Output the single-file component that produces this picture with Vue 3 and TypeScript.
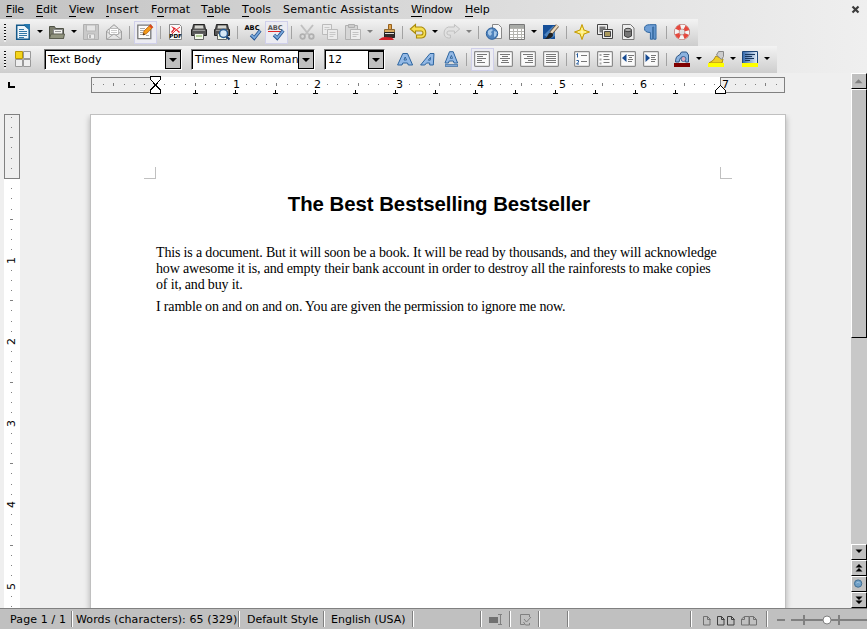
<script setup lang="ts">
interface Tool {
  icon: string
  menu?: boolean
  active?: boolean
  muted?: boolean
  sep?: boolean
}

const sep: Tool = { icon: '', sep: true }

const menus = ['File', 'Edit', 'View', 'Insert', 'Format', 'Table', 'Tools', 'Semantic Assistants', 'Window', 'Help']
// index of the underlined access key in each menu label
const keys = [0, 0, 0, 0, 1, 1, 0, -1, 0, 0]

const standard: Tool[] = [
  { icon: 'newDoc', menu: true }, { icon: 'open', menu: true }, { icon: 'save' }, { icon: 'mail' }, sep,
  { icon: 'edit', active: true }, sep,
  { icon: 'pdf' }, { icon: 'print' }, { icon: 'preview' }, sep,
  { icon: 'spell' }, { icon: 'autospell', active: true }, sep,
  { icon: 'cut' }, { icon: 'copy' }, { icon: 'paste', menu: true, muted: true }, { icon: 'brush' }, sep,
  { icon: 'undo', menu: true }, { icon: 'redo', menu: true, muted: true }, sep,
  { icon: 'link' }, { icon: 'table', menu: true }, { icon: 'draw' }, sep,
  { icon: 'navigator' }, { icon: 'gallery' }, { icon: 'sources' }, { icon: 'pilcrow' }, sep,
  { icon: 'help' },
]

const formatting: Tool[] = [
  { icon: 'bold' }, { icon: 'italic' }, { icon: 'underline' }, sep,
  { icon: 'left', active: true }, { icon: 'center' }, { icon: 'right' }, { icon: 'justify' }, sep,
  { icon: 'numbers' }, { icon: 'bullets' }, { icon: 'outdent' }, { icon: 'indent' }, sep,
  { icon: 'fontColor', menu: true }, { icon: 'highlight', menu: true }, { icon: 'background', menu: true },
]

const frame = '<rect x=".6" y=".6" width="14.8" height="14.8" rx=".8" fill="#fafafa" stroke="#8a8a8a" stroke-width="1.2"/>'
const lines = (d: string) => frame + `<path d="${d}" stroke="#777" fill="none"/>`
const check = '<path d="M6 11l3.2 3.2L15.2 6.5" fill="none" stroke="#24538f" stroke-width="3.4"/><path d="M6.3 11l3 3L15 6.9" fill="none" stroke="#79a8dc" stroke-width="1.8"/>'
const printer = '<path d="M2.5.5h11l1 5h1v6h-3v-2h-9v2h-3v-6h1z" fill="#555" stroke="#222"/><path d="M4 1.500h8l.5 3h-9z" fill="#d5d5d0"/><path d="M2 6.500h12" stroke="#999"/><path d="M3.500 9.500h9v6h-9z" fill="#f2f8ea" stroke="#666"/><path d="M5 12h6" stroke="#b4cf9a" stroke-width="2"/>'

const icons: Record<string, string> = {
  newDoc: '<path d="M1.700 1.200h8l4.500 4v10.100h-12.500z" fill="#eef6fb" stroke="#14598a" stroke-width="1.500"/><path d="M8.500 0h6.500v6.500z" fill="#2577ad"/><path d="M4 5.500h5M4 7.500h8M4 9.500h8M4 11.500h8M4 13.500h5" stroke="#3278a6"/>',
  open: '<path d="M.500 14.500v-12h5l1 2h8v10z" fill="#7b7d6c" stroke="#4e5145"/><path d="M4.500 5.500h9v5h-9z" fill="#f4f4f0" stroke="#888"/><path d="M6 7.500h6" stroke="#999"/><path d="M.500 14.500l1.500-4.500h13.500l-1 4.500z" fill="#92957f" stroke="#5c5f50"/>',
  save: '<path d="M.500.500h15v15h-15z" fill="#c9c9c9" stroke="#b0b0b0"/><path d="M3.500 1h9v6h-9z" fill="#e6e6e6" stroke="#b9b9b9"/><path d="M4.500 10h7v5h-7z" fill="#ededed" stroke="#b5b5b5"/><path d="M6 11h2v3h-2z" fill="#b5b5b5"/>',
  mail: '<path d="M.600 7l7.400-6.300L15.400 7v8.400h-14.800z" fill="#e6e6e6" stroke="#999"/><path d="M3.500 4.500h9v6h-9z" fill="#fff" stroke="#bbb"/><path d="M5 6.500h6M5 8.500h6" stroke="#ccc"/><path d="M.800 7.500l5 4-5 3.800M15.200 7.500l-5 4 5 3.800M5.800 11.500l2.200-1.500 2.200 1.500" fill="none" stroke="#aaa"/>',
  edit: '<path d="M.800 1.200h13v13.500h-13z" fill="#fbfbfb" stroke="#777" stroke-width="1.300"/><path d="M3 4.500h5M3 6.500h4M3 8.500h3M3 10.500h3M9 11.500h3" stroke="#aaa"/><path d="M6 11l1-4 6.500-6.300 2.400 2.600-6.600 6.500z" fill="#f49a18" stroke="#b65c0b" stroke-width=".8"/><path d="M12.700 1.300l2.500 2.500" stroke="#d42" stroke-width="2"/><path d="M6 11l.700-2 1.300 1.400z" fill="#222"/>',
  pdf: '<path d="M1.500.500h10l2 2v13h-12z" fill="#fafafa" stroke="#888"/><path d="M3 2l4 2 5 4-1 1-4-4-3 4-1-1 2.500-3z" fill="#e01b24"/><path d="M12 3l-4 3-4 4" stroke="#e33" fill="none"/><text x="7.600" y="14" font-size="5.600" font-weight="bold" text-anchor="middle" font-family="DejaVu Sans">PDF</text>',
  print: printer,
  preview: printer + '<path d="M12 12l3.500 3.500" stroke="#173e6e" stroke-width="2.200"/><circle cx="9.500" cy="9.500" r="4" fill="#d6e7f5" stroke="#285a91" stroke-width="1.500"/>',
  spell: '<text x="7" y="5.600" font-size="6.600" font-weight="bold" text-anchor="middle" font-family="DejaVu Sans">ABC</text>' + check,
  autospell: '<text x="7.200" y="5.600" font-size="6.600" font-weight="bold" fill="#555" text-anchor="middle" font-family="DejaVu Sans">ABC</text><path d="M0 8l1-1 1 1 1-1 1 1 1-1 1 1 1-1 1 1 1-1 1 1 1-1 1 1 1-1 1 1" stroke="#e12525" fill="none"/>' + check,
  cut: '<path d="M2 1l8 10M14 1L6 11" stroke="#c0c0c0" stroke-width="2"/><circle cx="3.600" cy="12.500" r="2.300" fill="none" stroke="#b0b0b0" stroke-width="1.800"/><circle cx="12.400" cy="12.500" r="2.300" fill="none" stroke="#b0b0b0" stroke-width="1.800"/>',
  copy: '<g fill="#ebebeb" stroke="#bbb"><path d="M.500.500h9v10h-9z"/><path d="M5.500 5.500h10v10h-10z"/></g><path d="M2.500 3.500h5M2.500 5.500h2M7.500 8.500h6M7.500 10.500h6M7.500 12.500h4" stroke="#c8c8c8"/>',
  paste: '<path d="M.500 1.500h12v14h-12z" fill="#d6d6d6" stroke="#b0b0b0"/><path d="M3.500.500h6v3h-6z" fill="#ccc" stroke="#b0b0b0"/><path d="M5.500 5.500h10v10h-10z" fill="#eee" stroke="#b5b5b5"/><path d="M7.500 8.500h6M7.500 10.500h6M7.500 12.500h4" stroke="#c4c4c4"/>',
  brush: '<path d="M9.500.500h3v6h-3z" fill="#e3a64c" stroke="#95601d"/><path d="M5.500 5.500h10v3h-10z" fill="#d7aa61" stroke="#8d6a34"/><path d="M5.500 8.500h10v5h-10z" fill="#332b2b" stroke="#222"/><path d="M6 9.500h9" stroke="#ddd"/><path d="M0 15.500l3-2 3-.500 7 .500 2 2.500H0z" fill="#d32029"/>',
  undo: '<path d="M6 3v-2.500L.800 5 6 9.500V7h5.500q2 0 2 2t-2 2H7v3h5q4.300-.500 4.300-5T12 3z" transform="translate(-.5 0)" fill="#f6df52" stroke="#a98a0b" stroke-width="1.100"/>',
  redo: '<path d="M10 3v-2.500L15.300 5 10 9.500V7H4.500q-2 0-2 2t2 2H6v3H4Q-.300 13.500-.300 9T4 3z" transform="translate(.4 0)" fill="#e1e1e1" stroke="#c0c0c0"/>',
  link: '<path d="M6.500.500h6l3 3v11h-9z" fill="#f7f7f7" stroke="#888"/><circle cx="6" cy="9.600" r="5.700" fill="#4f83bd" stroke="#2b5f9b"/><path d="M2 7q3-3 5-1l-2 2 1 2-2 2-2-2zM8 7l3 1-1 4-2 1z" fill="#a7c8e8"/>',
  table: '<path d="M.500.500h15v15h-15z" fill="#fff" stroke="#777"/><path d="M1 1h14v3H1z" fill="#a9aba7"/><path d="M1 4.500h14M1 7.500h14M1 10.500h14M1 13.500h14M4.500 4v11M8.500 4v11M12.500 4v11" stroke="#b5b5b0"/>',
  draw: '<path d="M0 1h12v14H0z" fill="#164f98"/><path d="M1 11L10 2h2v10l-5 3z" fill="#4c83bf"/><path d="M14.500 1.500L8 9" stroke="#66513c" stroke-width="4"/><path d="M14.500 1.500L8 9" stroke="#ead8bb" stroke-width="2.400"/><path d="M1 15q3-1 4-4t4-2q2 2 0 4t-8 2z" fill="#222"/>',
  navigator: '<path d="M8 .500L10 6l5.500 2L10 10 8 15.500 6 10 .500 8 6 6z" fill="#fbe34a" stroke="#c49a04"/><path d="M8 4v8M4 8h8" stroke="#fff9c0"/>',
  gallery: '<g fill="#eee" stroke="#444"><path d="M.500.500h10v10h-10z"/><path d="M5.500 5.500h10v9h-10z"/></g><path d="M2.500 2.500h6v3h-3v3h-3z" fill="#777"/><path d="M7.500 7.500h6v5h-6z" fill="#a9985b" stroke="#444"/>',
  sources: '<path d="M2.500.500h8l3.500 3.500v11.500h-11.500z" fill="#eee" stroke="#777"/><path d="M4.500 6v6q3.500 3 7 0V6z" fill="#777" stroke="#444"/><ellipse cx="8" cy="6" rx="3.500" ry="1.700" fill="#aaa" stroke="#444"/>',
  pilcrow: '<path d="M13.500.700v14.500h-2.300V3h-1v12.200H7.900V8.500Q2 8.500 2 4.600T7 .700z" transform="translate(-.5 0)" fill="#6f9fd6" stroke="#2c649f"/>',
  help: '<circle cx="8" cy="8" r="5.300" fill="none" stroke="#a8514b" stroke-width="5.200"/><circle cx="8" cy="8" r="5.300" fill="none" stroke="#f5f5f5" stroke-width="4.200"/><circle cx="8" cy="8" r="5.300" fill="none" stroke="#e5483d" stroke-width="4.200" stroke-dasharray="4.163 4.163" stroke-dashoffset="-2.080"/>',
  bold: '<path d="M.600 14L5.800 2.500h4.700L15.600 14h-4.300l-.8-2H5.800L5 14zM7 9h2.500L8.200 6z" fill="#93b9e6" stroke="#2c649f" fill-rule="evenodd"/>',
  italic: '<path d="M.600 14L10 2.500h4L13.300 14h-3.600v-2H6.500l-1.700 2zM8.300 9.200h1.900l.3-2.700z" fill="#93b9e6" stroke="#2c649f" fill-rule="evenodd"/>',
  underline: '<path d="M2 12L6.500.700h3.700L14.600 12h-3.500l-.8-2H6.200l-.8 2zM7.200 7.300h2.300L8.400 4.500z" fill="#93b9e6" stroke="#2c649f" fill-rule="evenodd"/><path d="M2 14.500h13" stroke="#2c649f" stroke-width="2.400"/><path d="M2.500 14.500h12" stroke="#93b9e6" stroke-width=".8"/>',
  left: lines('M3 3.500h10M3 5.500h6M3 7.500h9M3 9.500h5M3 11.500h8'),
  center: lines('M3 3.500h10M5 5.500h6M3 7.500h10M5 9.500h6M4 11.500h8'),
  right: lines('M3 3.500h10M7 5.500h6M4 7.500h9M8 9.500h5M5 11.500h8'),
  justify: lines('M3 3.500h10M3 5.500h10M3 7.500h10M3 9.500h10M3 11.500h10'),
  numbers: lines('M7 4.500h6M7 10.500h6') + '<path d="M3.500 6.500V2.500L2.500 3.500M2.500 9.500h2v1.500l-2 2h2.500" fill="none" stroke="#245a9c"/>',
  bullets: lines('M6.500 3.500h6M6.500 5.500h5M6.500 8.500h6M6.500 11.500h6') + '<path d="M2.500 3h2v2h-2zM2.500 7.500h2v2h-2zM2.500 11.500h2v2h-2z" fill="#aaa"/>',
  outdent: lines('M8 4.500h6M9 6.500h3M8 8.500h5M8 10.500h4') + '<path d="M6.500 3v8l-4.500-4z" fill="#174b92"/>',
  indent: lines('M8 4.500h5M8 6.500h4M8 8.500h5M8 10.500h4') + '<path d="M2.500 3v8l4.500-4z" fill="#174b92"/>',
  fontColor: '<path d="M1.500 11q0-6 4-7l2-3h5l2 3v7h-3L10 6q-4-1-5 5z" fill="#8bb2df" stroke="#2c5586"/><circle cx="9.500" cy="8" r="2.500" fill="#d9a8bb" stroke="#3c6b9f"/><path d="M0 12h16v4H0z" fill="#800000"/>',
  highlight: '<path d="M1 12q5-2 7-7l7 3-1 4z" fill="#f0cf24" stroke="#b08d09"/><path d="M8.500 4l2-3.500h5v5l-2 3z" fill="#ccc" stroke="#888"/><path d="M0 12h16v4H0z" fill="#ff0"/>',
  background: '<path d="M.500.500h15v13h-15z" fill="url(#bgBlue)" stroke="#1e4779"/><path d="M3 3.500h10M3 5.500h7M3 7.500h9M3 9.500h5" stroke="#18365c"/><path d="M0 12h16v4H0z" fill="#ff0"/>',
}

// ruler scale: pixels per inch, with a mark every eighth
const inch = 81.5
const marks = (from: number, to: number, zero: number) => {
  const out: { p: number; n: number; half: boolean }[] = []
  for (let i = -8; i < 62; i++) {
    const p = Math.floor(zero + (i * inch) / 8)
    if (p > from && p < to && i !== 0) out.push({ p, n: i % 8 === 0 ? i / 8 : 0, half: Math.abs(i % 8) === 4 })
  }
  return out
}
const hMarks = marks(91, 784, 154.600)
const vMarks = marks(115, 608, 178.500)
const tabs = Array.from({ length: 13 }, (_, i) => 195 + i * 40)
</script>

<template>
  <div class="app">
    <svg class="defs" width="0" height="0"><defs><linearGradient id="bgBlue"><stop offset="0" stop-color="#2f65aa" /><stop offset="1" stop-color="#e8f0f8" /></linearGradient></defs></svg>
    <header>
      <nav>
        <span v-for="(m, i) in menus" :key="m"><template v-if="keys[i] < 0">{{ m }}</template><template v-else>{{ m.slice(0, keys[i]) }}<u>{{ m[keys[i]] }}</u>{{ m.slice(keys[i] + 1) }}</template></span>
        <svg class="close" viewBox="0 0 9 9"><path d="M1.500 1.500l6 6M7.500 1.500l-6 6" stroke="#3c3c3c" stroke-width="2.200" /></svg>
      </nav>
      <div class="bar">
        <div class="handle" />
        <template v-for="(t, i) in standard" :key="i">
          <div v-if="t.sep" class="sep" />
          <div v-else class="tool" :class="{ active: t.active }">
            <svg viewBox="0 0 16 16" v-html="icons[t.icon]" />
          </div>
          <div v-if="t.menu" class="drop" :class="{ muted: t.muted }" />
        </template>
      </div>
      <div class="bar second">
        <div class="handle" />
        <div class="tool">
          <svg viewBox="0 0 16 16"><path d="M.5.5h7v7h-7z" fill="#f4d51c" stroke="#b99705" /><path d="M8.500.5h7v7h-7zM.5 8.500h7v7h-7zM8.500 8.500h7v7h-7z" fill="#eee" stroke="#999" /></svg>
        </div>
        <div class="combo para"><span>Text Body</span><b /></div>
        <div class="combo face"><span>Times New Roman</span><b /></div>
        <div class="combo size"><span>12</span><b /></div>
        <template v-for="(t, i) in formatting" :key="i">
          <div v-if="t.sep" class="sep" />
          <div v-else class="tool" :class="{ active: t.active }">
            <svg viewBox="0 0 16 16" v-html="icons[t.icon]" />
          </div>
          <div v-if="t.menu" class="drop" />
        </template>
      </div>
    </header>

    <main>
      <div class="work">
        <svg class="hruler" width="851" height="41" viewBox="0 73 851 41" shape-rendering="crispEdges">
          <path d="M8 82h2v4h5v2H8z" fill="#000" />
          <path d="M155 77h565v16H155z" fill="#fff" />
          <path d="M91.500 77.500h64v15h-64zM720.500 77.500h64v15h-64z" fill="#efefef" stroke="#808080" />
          <template v-for="k in hMarks" :key="k.p">
            <text v-if="k.n" :x="k.p + .5" y="88">{{ k.n }}</text>
            <rect v-else :x="k.p" :y="k.half ? 83 : 84" width="1" :height="k.half ? 3 : 1" fill="#808080" />
          </template>
          <path v-for="t in tabs" :key="t" :d="`M${t} 90h1v3h2v1h-5v-1h2z`" fill="#000" />
          <path d="M150.500 76.500h10v3l-5 5.500 5 5v3.500h-10V90l5-5-5-5.500z" fill="#fff" stroke="#000" />
          <path d="M720.500 85.500l5 5v3h-10v-3z" fill="#fff" stroke="#000" />
        </svg>
        <div class="canvas">
          <svg class="vruler" width="90" height="494" viewBox="0 114 90 494" shape-rendering="crispEdges">
            <path d="M4 179h16v429H4z" fill="#fff" />
            <path d="M4.500 114.500h15v64h-15z" fill="#efefef" stroke="#808080" />
            <template v-for="k in vMarks" :key="k.p">
              <text v-if="k.n" :transform="`translate(15 ${k.p + .5}) rotate(-90)`">{{ k.n }}</text>
              <rect v-else :x="k.half ? 10 : 11" :y="k.p" :width="k.half ? 3 : 1" height="1" fill="#808080" />
            </template>
          </svg>
          <article>
            <div class="corners"><span /><span /></div>
            <h1>The Best Bestselling Bestseller</h1>
            <p>
              This is a document. But it will soon be a book. It will be read by thousands, and they will acknowledge<br>
              how awesome it is, and empty their bank account in order to destroy all the rainforests to make copies<br>
              of it, and buy it.
            </p>
            <p>I ramble on and on and on. You are given the permission to ignore me now.</p>
          </article>
        </div>
      </div>
      <aside>
        <svg viewBox="0 0 16 16" class="btn"><path d="M3 10.500l4.500-4.500 4.500 4.500z" fill="#808080" /></svg>
        <div class="track"><div class="thumb" /></div>
        <svg viewBox="0 0 16 16" class="btn"><path d="M4 5h8L8 9z" /></svg>
        <svg viewBox="0 0 16 16" class="btn"><path d="M4 7.500l4-4 4 4zM4 12l4-4 4 4z" /></svg>
        <svg viewBox="0 0 16 16" class="btn"><circle cx="7" cy="7.500" r="4.200" fill="#6f9fc6" stroke="#35658c" /><path d="M5 7q2-2.500 4 0" stroke="#a9cbe4" fill="none" /></svg>
        <svg viewBox="0 0 16 16" class="btn"><path d="M4 4h8L8 8zM4 8.500h8l-4 4z" /></svg>
      </aside>
    </main>

    <footer>
      <span class="first">Page 1 / 1</span>
      <span class="words">Words (characters): 65 (329)</span>
      <span>Default Style</span>
      <span class="lang">English (USA)</span>
      <span />
      <span><svg width="14" height="12" viewBox="0 0 14 12"><path d="M0 3h9v6H0z" fill="#707070" /><path d="M9 .500h4M9 10.500h4M11.500.500v10" stroke="#808080" /></svg></span>
      <span><svg width="14" height="12" viewBox="-2 0 14 12"><path d="M9.500 3V.500h-9v10h4M9.500 9v2h-4l-2-3M4 5l2.500 3L11 3" fill="none" stroke="#808080" /></svg></span>
      <span />
      <span />
      <span class="views">
        <svg width="56" height="11" viewBox="0 0 56 11" fill="none"><path d="M1.500 1.500h4l2.500 2.500v6h-6.500zM5.500 1.500v3h3" stroke="#707070" /><path d="M15.500 1.500h4l2.500 2.500v6h-6.500zM19.500 1.500v3h3M25.500 1.500h4l2.500 2.500v6h-6.500zM29.500 1.500v3h3" stroke="#404040" /><path d="M42.500 1.500h4.500v8.500h-7.500v-6zM42.500 1.500v3h-3M47.500 1.500h4l3 3v5.500h-7zM51.500 1.500v3h3" stroke="#707070" /></svg>
      </span>
      <span class="zoom">
        <svg width="92" height="14" viewBox="0 0 92 14"><path d="M2 7h8M16 7h76M29 2v10M64 2v10" stroke="#808080" stroke-width="2" /><circle cx="52" cy="7" r="4" fill="#fff" stroke="#808080" /></svg>
      </span>
    </footer>
  </div>
</template>

<style>
body { overflow: hidden; }
</style>

<style scoped>
.app { width: 867px; height: 629px; display: flex; flex-direction: column; background: #efefef; font: 11px "DejaVu Sans", sans-serif; color: #000; overflow: hidden; white-space: nowrap; }
.defs { position: absolute; }
header { height: 73px; flex: none; background: linear-gradient(90deg, #c3c3c3, #efefef); }
nav { height: 19px; box-sizing: border-box; padding: 1px 0 0 6px; display: grid; grid-template-columns: 30px 33px 37px 45px 50px 41px 41px 128px 54px 1fr 16px; line-height: 17px; }
nav u { text-decoration: none; box-shadow: 0 1px 0 #000; display: inline-block; line-height: 12px; }
nav span:nth-child(1) { letter-spacing: -.4px; }
nav span:nth-child(3) { letter-spacing: -.3px; }
nav span:nth-child(4) { letter-spacing: .2px; }
nav span:nth-child(6) { letter-spacing: -.25px; }
nav span:nth-child(8) { letter-spacing: .28px; }
nav span:nth-child(9) { letter-spacing: -.35px; }
nav span:nth-child(10) { letter-spacing: -.15px; }
.close { width: 9px; height: 9px; margin-top: 4px; }
.bar { height: 27px; width: 698px; display: flex; align-items: center; background: linear-gradient(#f3f3f3, #cdcdcd); }
.second { width: 777px; }
.handle { width: 2px; height: 18px; margin: 0 6px 0 4px; background: repeating-linear-gradient(#111 0 1px, #eee 1px 3px); }
.tool { width: 23px; height: 23px; display: flex; align-items: center; justify-content: center; box-sizing: border-box; padding: 0 1px 1px 0; border: 1px solid transparent; flex: none; }
.tool svg { width: 16px; height: 16px; flex: none; overflow: visible; }
.active { border-color: #d0d0ea; background: #ececf2; }
.sep { width: 1px; height: 13px; margin: 0 4px 0 3px; background: #a2a2a2; flex: none; }
.drop { width: 11px; flex: none; height: 3px; margin-bottom: 2px; background: #000; clip-path: polygon(2px 0, 8px 0, 5px 3px); }
.muted { background: #808080; }
.combo { height: 21px; box-sizing: border-box; border: 1px solid #777; border-right-color: #fff; border-bottom-color: #fff; background: #fff; display: flex; align-items: stretch; box-shadow: inset 1px 1px 0 #000; line-height: 19px; flex: none; }
.combo span { flex: 1; overflow: hidden; padding-left: 3px; min-width: 0; }
.combo b { width: 16px; margin: 1px 0 0; box-sizing: border-box; border: 1px solid #fff; border-color: #fff #000 #000 #fff; outline: 1px solid #000; outline-offset: -1px; background: #c0c0c0; }
.combo b::after { content: ""; display: block; width: 8px; height: 4px; margin: 6px 3px; background: #000; clip-path: polygon(0 0, 100% 0, 50% 100%); }
.para { width: 138px; margin-left: 9px; }
.face { width: 124px; margin-left: 9px; letter-spacing: .12px; }
.size { width: 61px; margin: 0 9px; }
main { height: 535px; display: flex; }
.work { width: 851px; }
.hruler, .vruler { display: block; flex: none; }
.hruler text, .vruler text { font: 11px "DejaVu Sans", sans-serif; text-anchor: middle; }
.canvas { display: flex; height: 494px; overflow: hidden; }
article { width: 694px; height: 494px; border: 1px solid #c0c0c0; border-bottom: 0; background: #fff; box-shadow: 0 3px 6px rgba(0, 0, 0, .28); }
.corners { display: flex; justify-content: space-between; margin: 52px 53px 0; }
.corners span { width: 11px; height: 11px; border: solid #c0c0c0; border-width: 0 1px 1px 0; }
.corners span + span { border-width: 0 0 1px 1px; }
h1 { margin: 12px 0 28px 2px; font: bold 20.400px/26px "Liberation Sans", sans-serif; letter-spacing: -.04px; text-align: center; }
p { margin: 0 0 6px 65px; font: 14px/16px "Liberation Serif", serif; letter-spacing: -.163px; }
aside { width: 16px; display: flex; flex-direction: column; background: #c8c8c8; }
.btn, .thumb { box-sizing: border-box; border: 1px solid; border-color: #fff #000 #000 #fff; background: #c0c0c0; }
.btn { width: 16px; height: 16px; flex: none; display: block; }
.track { flex: 1; }
.thumb { height: 249px; }
footer { height: 21px; box-sizing: border-box; border-top: 1px solid #808080; background: #c0c0c0; display: grid; grid-template-columns: 72px 167px 85px 89px 68px 29px 29px 29px 123px 76px 1fr; }
footer span { height: 16px; margin-top: 2px; padding: 2px 0 0 7px; box-sizing: border-box; border-right: 1px solid #808080; border-left: 1px solid #fff; line-height: 16px; display: flex; align-items: center; }
footer .first { padding-left: 9px; border-left-color: transparent; letter-spacing: .13px; }
footer .words { padding-left: 3px; letter-spacing: .09px; }
footer .lang { padding-left: 6px; }
footer .views { padding-left: 10px; }
footer .zoom { border-right: 0; }
</style>
